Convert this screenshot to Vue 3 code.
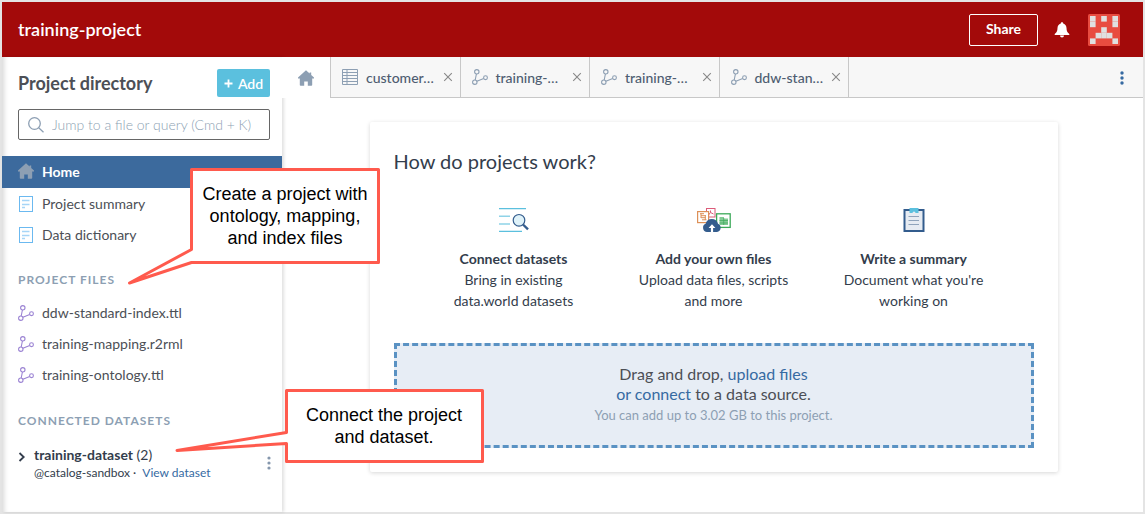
<script setup>
import { ref } from 'vue'

const query = ref('')

const files = ['ddw-standard-index.ttl', 'training-mapping.r2rml', 'training-ontology.ttl']

const tabs = [
  { id: 1, label: 'customer…', icon: 'table' },
  { id: 2, label: 'training-…', icon: 'graph' },
  { id: 3, label: 'training-…', icon: 'graph' },
  { id: 4, label: 'ddw-stan…', icon: 'graph' },
]

const avatarCells = [
  [0, 0], [2, 0], [4, 0],
  [0, 1], [4, 1],
  [2, 2],
  [1, 3], [2, 3], [3, 3],
  [0, 4], [4, 4],
]
</script>

<template>
  <div class="frame">
    <svg class="defs" aria-hidden="true">
      <symbol id="i-home" viewBox="0 0 16 16">
        <path d="M8 0.3 L11.6 3.6 V2.6 H13.2 V5 L16 7.6 V8.6 H14.2 V15 Q14.2 15.8 13.4 15.8 H9.8 V11.4 H6.2 V15.8 H2.6 Q1.8 15.8 1.8 15 V8.6 H0 V7.6 Z" fill="currentColor" />
      </symbol>
      <symbol id="i-graph" viewBox="0 0 16 16">
        <g fill="none" stroke="currentColor" stroke-width="1.1">
          <circle cx="4.8" cy="2.8" r="2.2" />
          <circle cx="2.8" cy="13.2" r="2.2" />
          <circle cx="13.5" cy="8.7" r="1.9" />
          <path d="M4.4 5 L3.2 11 M4.9 12.3 L11.7 9.4" />
        </g>
      </symbol>
      <symbol id="i-doc" viewBox="0 0 16 16">
        <rect x="1.5" y="0.5" width="13" height="15" fill="#fff" stroke="#6bb9f0" />
        <path d="M4 4.5 H11.5 M4 8.5 H11.5 M4 11.5 H7" fill="none" stroke="#a6d5f7" stroke-width="1.6" />
      </symbol>
      <symbol id="i-table" viewBox="0 0 16 16">
        <path d="M0.5 0.5 H15.5 V15.5 H0.5 Z M0.5 3.5 H15.5 M0.5 6.5 H15.5 M0.5 9.5 H15.5 M0.5 12.5 H15.5 M5 0.5 V15.5" fill="none" stroke="currentColor" />
      </symbol>
    </svg>

    <header class="topbar">
      <h1>training-project</h1>
      <div class="actions">
        <button class="share" type="button">Share</button>
        <button class="plain" type="button" aria-label="Notifications">
          <svg width="16" height="16" viewBox="0 0 16 16">
            <path d="M8 0.2 C8.8 0.2 9.2 0.8 9.2 1.4 C11.4 2 12.4 3.8 12.5 6 C12.6 9 13.2 10.4 15.3 12 V13 H0.7 V12 C2.8 10.4 3.4 9 3.5 6 C3.6 3.8 4.6 2 6.8 1.4 C6.8 0.8 7.2 0.2 8 0.2 Z M6 13.6 H10 A2 2 0 0 1 6 13.6 Z" fill="#fff" />
          </svg>
        </button>
        <button class="plain" type="button" aria-label="Account">
          <svg width="32" height="32" viewBox="0 0 32 32">
            <rect width="32" height="32" rx="1.5" fill="#e84c40" />
            <rect
              v-for="[cx, cy] in avatarCells"
              :key="`${cx}-${cy}`"
              :x="2 + cx * 5.6"
              :y="2 + cy * 5.6"
              width="5.6"
              height="5.6"
              fill="#e0e0e0"
            />
          </svg>
        </button>
      </div>
    </header>

    <div class="body">
      <aside class="sidebar">
        <div class="side-head">
          <h2>Project directory</h2>
          <button class="add" type="button">
            <svg width="9" height="9" viewBox="0 0 9 9"><path d="M4.5 0.5 V8.5 M0.5 4.5 H8.5" stroke="#fff" stroke-width="1.8" /></svg>
            Add
          </button>
        </div>

        <label class="search">
          <svg width="16" height="16" viewBox="0 0 16 16">
            <g fill="none" stroke="#8d9fb3" stroke-width="1.3">
              <circle cx="6.5" cy="6.5" r="5.8" />
              <path d="M10.7 10.7 L15.5 15.3" />
            </g>
          </svg>
          <input v-model="query" type="text" placeholder="Jump to a file or query (Cmd + K)" aria-label="Jump to a file or query">
        </label>

        <nav class="list">
          <a href="#" class="item active"><svg class="icon"><use href="#i-home" /></svg>Home</a>
          <a href="#" class="item"><svg class="icon"><use href="#i-doc" /></svg>Project summary</a>
          <a href="#" class="item"><svg class="icon"><use href="#i-doc" /></svg>Data dictionary</a>
        </nav>

        <h3>Project files</h3>
        <nav class="list files">
          <a v-for="f in files" :key="f" href="#" class="item">
            <svg class="icon graph"><use href="#i-graph" /></svg>{{ f }}
          </a>
        </nav>

        <h3>Connected datasets</h3>
        <div class="dataset">
          <button class="plain chevron" type="button" aria-label="Expand training-dataset">
            <svg width="8" height="10" viewBox="0 0 8 10"><path d="M1.5 1 L5.7 5 L1.5 9" fill="none" stroke="#333d4c" stroke-width="1.8" /></svg>
          </button>
          <div class="dataset-info">
            <div class="dataset-name"><strong>training-dataset</strong> (2)</div>
            <div class="dataset-meta">@catalog-sandbox · <a href="#">View dataset</a></div>
          </div>
          <button class="plain more" type="button" aria-label="Dataset menu">
            <svg width="4" height="14" viewBox="0 0 4 14" fill="#8597ad"><circle cx="2" cy="2" r="1.6" /><circle cx="2" cy="7" r="1.6" /><circle cx="2" cy="12" r="1.6" /></svg>
          </button>
        </div>
      </aside>

      <div class="workspace">
        <div class="tabbar">
          <button class="home-tab" type="button" aria-label="Home"><svg class="icon"><use href="#i-home" /></svg></button>
          <div class="tabs">
            <div v-for="t in tabs" :key="t.id" class="tab">
              <svg class="icon"><use :href="`#i-${t.icon}`" /></svg>
              <span>{{ t.label }}</span>
              <button class="plain" type="button" aria-label="Close tab">
                <svg width="10" height="10" viewBox="0 0 10 10"><path d="M1.2 1.2 L8.8 8.8 M8.8 1.2 L1.2 8.8" stroke="#888" stroke-width="1.1" /></svg>
              </button>
            </div>
          </div>
          <button class="plain tab-menu" type="button" aria-label="Tab menu">
            <svg width="4" height="14" viewBox="0 0 4 14" fill="#366aa2"><circle cx="2" cy="2" r="1.7" /><circle cx="2" cy="7" r="1.7" /><circle cx="2" cy="12" r="1.7" /></svg>
          </button>
        </div>

        <main>
          <section class="card">
            <h2>How do projects work?</h2>
            <div class="steps">
              <div class="step">
                <svg width="32" height="24" viewBox="0 0 32 24">
                  <path d="M1 0.7 H28 M1 23.3 H24" stroke="#5bc0de" stroke-width="1.2" />
                  <path d="M1 8.3 H12 M1 16 H12" stroke="#8fd3e8" stroke-width="1.5" />
                  <circle cx="21" cy="12.3" r="5.8" fill="#dff2f9" stroke="#335c8d" stroke-width="1.2" />
                  <path d="M25 16.5 L30 21.3" stroke="#335c8d" stroke-width="2.4" />
                </svg>
                <h4>Connect datasets</h4>
                <p>Bring in existing data.world datasets</p>
              </div>
              <div class="step">
                <svg width="34" height="24" viewBox="0 0 34 24">
                  <rect x="9.5" y="0.5" width="8.5" height="8.5" fill="#fff" stroke="#dc5b79" />
                  <path d="M13.5 2.5 V4.5 L11.5 7 M13.5 4.5 L16.5 6" stroke="#dc5b79" fill="none" />
                  <rect x="0.6" y="3.6" width="11" height="11" fill="#fff" stroke="#dd9058" stroke-width="1.2" />
                  <path d="M3 5.7 H7 M4 7.7 H8.5 M4 9.7 H8.5 M5 11.8 H9.5 M4 5.5 V10 M8.3 7 V12" stroke="#dd9058" fill="none" />
                  <rect x="19.6" y="5.8" width="13.6" height="13.6" fill="#fff" stroke="#3daa5a" stroke-width="1.3" />
                  <path d="M22.5 9 H27 V10.5 H31 V17 H22.5 Z" fill="#83cb95" />
                  <path d="M22.5 12.5 H31 M22.5 15 H31 M26.7 10 V17" stroke="#3daa5a" stroke-width="0.7" />
                  <path d="M10 24 A4.3 4.3 0 0 1 8.6 15.8 A6.4 6.4 0 0 1 21 15.8 A4.3 4.3 0 0 1 20 24 Z" fill="#335c8d" />
                  <path d="M15 16.2 L18.4 20 H16.1 V24 H13.9 V20 H11.6 Z" fill="#fff" />
                </svg>
                <h4>Add your own files</h4>
                <p>Upload data files, scripts and more</p>
              </div>
              <div class="step">
                <svg width="22" height="24" viewBox="0 0 22 24">
                  <rect x="1.5" y="2" width="19" height="21" fill="#e6ebf2" stroke="#335c8d" stroke-width="2" />
                  <path d="M5.5 8.5 H16 M5.5 12.5 H16 M5.5 16.5 H16" stroke="#8fa3bb" />
                  <path d="M6.5 0 H15.5 V5 H12.5 A1.5 1.5 0 0 0 9.5 5 H6.5 Z" fill="#5bc0de" />
                </svg>
                <h4>Write a summary</h4>
                <p>Document what you're working on</p>
              </div>
            </div>
            <div class="dropzone">
              <p>Drag and drop, <a href="#">upload files<br>or connect</a> to a data source.</p>
              <small>You can add up to 3.02 GB to this project.</small>
            </div>
          </section>
        </main>
      </div>
    </div>

    <div class="callout project-note">
      <svg width="256" height="122" viewBox="0 0 256 122">
        <path d="M65.5 3.5 H252.5 V96.5 H65.5 L3.5 117 L65.5 83.5 Z" />
      </svg>
      <p>Create a project with ontology, mapping, and index files</p>
    </div>
    <div class="callout dataset-note">
      <svg width="312" height="78" viewBox="0 0 312 78">
        <path d="M112.5 3.5 H308.5 V74.5 H112.5 V56.5 L3 63.5 L112.5 45.5 Z" />
      </svg>
      <p>Connect the project and dataset.</p>
    </div>
  </div>
</template>

<style>
body {
  margin: 0;
}
</style>

<style scoped>
.frame,
.frame * {
  box-sizing: border-box;
}
.frame {
  position: relative;
  display: flex;
  flex-direction: column;
  min-height: 100vh;
  border: 2px solid #e4e4e4;
  background: #fff;
  color: #333d4c;
  font: 14px/21px Lato, "Liberation Sans", sans-serif;
}
h1, h2, h3, h4, p {
  margin: 0;
}
a {
  color: #366aa2;
  text-decoration: none;
}
button {
  font: inherit;
  cursor: pointer;
}
svg {
  display: block;
  flex: none;
}
.defs {
  position: absolute;
  width: 0;
  height: 0;
}
.icon {
  width: 16px;
  height: 16px;
}
.plain {
  display: flex;
  padding: 0;
  border: 0;
  background: none;
}

.topbar {
  display: flex;
  align-items: center;
  justify-content: space-between;
  height: 55px;
  padding: 0 23px 0 16px;
  background: #a30a0a;
  color: #fff;
}
.topbar h1 {
  font-size: 18px;
  font-weight: 600;
}
.actions {
  display: flex;
  align-items: center;
}
.share {
  height: 32px;
  width: 69px;
  margin-right: 16px;
  padding: 0 0 2px;
  border: 1px solid #fff;
  border-radius: 2px;
  background: none;
  color: #fff;
  font-weight: 700;
}
.actions .plain + .plain {
  margin-left: 18px;
}

.body {
  display: flex;
  flex: 1;
}
.sidebar {
  flex: none;
  width: 280px;
  box-shadow: inset 5px 0 5px -3px rgba(0, 0, 0, 0.16), 2px 0 3px rgba(0, 0, 0, 0.12);
}
.side-head {
  display: flex;
  align-items: center;
  justify-content: space-between;
  padding: 12px 12px 12px 16px;
}
.side-head h2 {
  color: #4c4f56;
  font-size: 18px;
  font-weight: 700;
}
.add {
  display: flex;
  align-items: center;
  justify-content: center;
  gap: 5px;
  width: 53px;
  height: 28px;
  padding: 0;
  border: 0;
  border-radius: 2px;
  background: #5bc0de;
  color: #fff;
  font-weight: 600;
}
.search {
  display: flex;
  align-items: center;
  gap: 8px;
  height: 31px;
  margin: 0 12px 16px 16px;
  padding: 0 9px;
  border: 1px solid #666;
  border-radius: 2px;
}
.search input {
  flex: 1;
  min-width: 0;
  padding: 0;
  border: 0;
  outline: 0;
  background: none;
  color: #333d4c;
  font: inherit;
}
.search input::placeholder {
  color: #8d9fb3;
  font-weight: 300;
  opacity: 1;
}
.item {
  display: flex;
  align-items: center;
  gap: 8px;
  height: 31px;
  padding-left: 16px;
  color: #4c4f56;
}
.item.active {
  height: 32px;
  padding-bottom: 2px;
  background: #3c6a9d;
  color: #fff;
  font-weight: 700;
}
.item.active .icon {
  color: #8d9fb3;
}
.graph {
  color: #9b83d3;
}
.sidebar h3 {
  padding: 18px 0 0 16px;
  color: #8d9fb3;
  font-size: 12px;
  line-height: 24px;
  font-weight: 700;
  letter-spacing: 1px;
  text-transform: uppercase;
}
.files {
  padding: 5px 0 1px;
}
.dataset {
  display: flex;
  padding: 12px 11px 0 16px;
}
.chevron {
  width: 16px;
  height: 24px;
  align-items: center;
}
.dataset-info {
  flex: 1;
}
.dataset-name {
  line-height: 20px;
}
.dataset-meta {
  font-size: 12px;
  line-height: 16px;
}
.dataset-meta a {
  margin-left: 3px;
}
.more {
  align-items: center;
}

.workspace {
  flex: 1;
  min-width: 0;
}
.tabbar {
  position: relative;
  display: flex;
  height: 41px;
  background: #f7f7f7;
  box-shadow: inset 0 -1px #c8c8c8;
  color: #8d9fb3;
}
.home-tab {
  display: flex;
  align-items: center;
  justify-content: center;
  width: 48px;
  padding: 0;
  border: 0;
  background: #fff;
  color: inherit;
}
.tabs {
  display: grid;
  grid-template-columns: repeat(4, minmax(0, 1fr));
  width: 519px;
  border-right: 1px solid #c8c8c8;
}
.tab {
  display: flex;
  align-items: center;
  gap: 8px;
  padding: 0 7px 1px 11px;
  border-left: 1px solid #c8c8c8;
}
.tab span {
  flex: 1;
  min-width: 0;
  color: #4e5d71;
  font-weight: 500;
  white-space: nowrap;
}
.tab-menu {
  align-items: center;
  margin: 0 19px 0 auto;
}

main {
  padding: 24px 24px 24px 26px;
}
.card {
  max-width: 688px;
  margin: 0 auto;
  padding: 24px;
  border-radius: 2px;
  box-shadow: 0 1px 4px rgba(0, 0, 0, 0.16);
}
.card h2 {
  font-size: 20px;
  line-height: 30px;
  font-weight: 400;
}
.steps {
  display: grid;
  grid-template-columns: repeat(3, 1fr);
  padding: 32px 20px;
}
.step {
  display: flex;
  flex-direction: column;
  align-items: center;
  padding: 0 24px;
  text-align: center;
}
.step h4 {
  margin-top: 16px;
  font-size: 14px;
  font-weight: 700;
}
.dropzone {
  padding: 18px 24px;
  border: 3px dashed #5a92c3;
  background: #e7edf5;
  color: #4c4f56;
  text-align: center;
}
.dropzone p {
  font-size: 16px;
  line-height: 20px;
}
.dropzone small {
  display: block;
  color: #8d9fb3;
  font-size: 13px;
  line-height: 23px;
}

.callout {
  position: absolute;
  color: #000;
  font: 18px/22px "Liberation Sans", Arial, sans-serif;
  text-align: center;
}
.callout path {
  fill: #fff;
  stroke: #ff5a4d;
  stroke-width: 3;
  stroke-linejoin: round;
}
.callout p {
  position: absolute;
  right: 7px;
}
.project-note {
  top: 164px;
  left: 124px;
}
.project-note p {
  top: 17px;
  width: 180px;
}
.dataset-note {
  top: 385px;
  left: 172px;
}
.dataset-note p {
  top: 17px;
  width: 190px;
  padding: 0 12px;
}
</style>
